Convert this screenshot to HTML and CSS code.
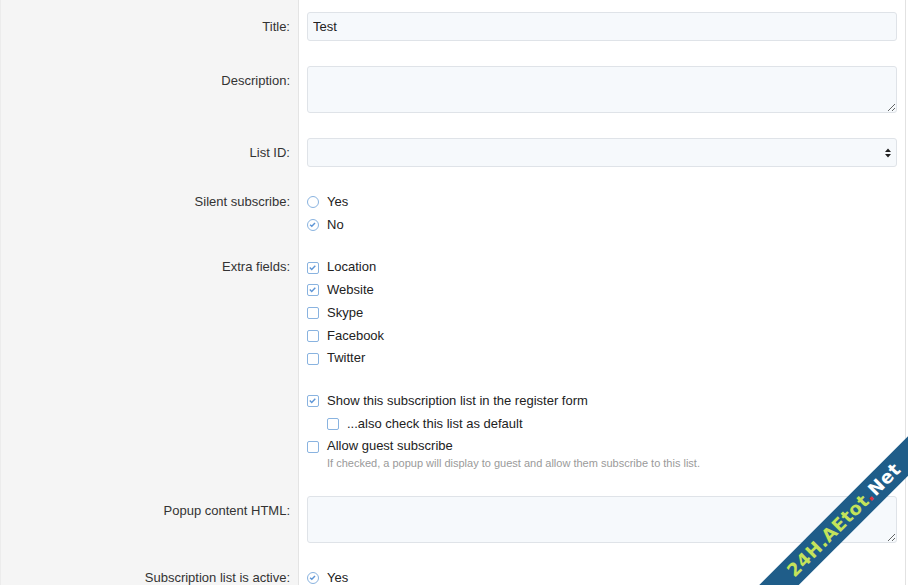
FILE: index.html
```html
<!DOCTYPE html>
<html lang="en">
<head>
  <meta charset="UTF-8">
  <meta name="viewport" content="width=device-width, initial-scale=1.0">
  <link rel="stylesheet" href="styles.css">
  <title>Subscription list</title>
</head>
<body>
  <form class="form">
    <div class="row">
      <div class="row-label">Title:</div>
      <div class="row-field"><input class="input" type="text" value="Test"></div>
    </div>

    <div class="row">
      <div class="row-label">Description:</div>
      <div class="row-field"><textarea class="input textarea"></textarea></div>
    </div>

    <div class="row">
      <div class="row-label">List ID:</div>
      <div class="row-field">
        <div class="input select">
          <svg width="6" height="10" viewBox="0 0 6 10"><path d="M0 4 L3 0.5 L6 4 Z M0 6 L3 9.5 L6 6 Z" fill="#222"/></svg>
        </div>
      </div>
    </div>

    <div class="row options">
      <div class="row-label">Silent subscribe:</div>
      <div class="row-field">
        <div class="option"><span class="radio"></span>Yes</div>
        <div class="option"><span class="radio checked"><svg viewBox="0 0 12 12"><path d="M3.6 6.2 L5.3 7.8 L8.5 4.4" /></svg></span>No</div>
      </div>
    </div>

    <div class="row options">
      <div class="row-label">Extra fields:</div>
      <div class="row-field">
        <div class="option"><span class="check"><svg viewBox="0 0 12 12"><path d="M3.3 6.1 L5.2 7.9 L8.8 4.2" /></svg></span>Location</div>
        <div class="option"><span class="check"><svg viewBox="0 0 12 12"><path d="M3.3 6.1 L5.2 7.9 L8.8 4.2" /></svg></span>Website</div>
        <div class="option"><span class="check"></span>Skype</div>
        <div class="option"><span class="check"></span>Facebook</div>
        <div class="option"><span class="check"></span>Twitter</div>
      </div>
    </div>

    <div class="row options hinted">
      <div class="row-label"></div>
      <div class="row-field">
        <div class="option"><span class="check"><svg viewBox="0 0 12 12"><path d="M3.3 6.1 L5.2 7.9 L8.8 4.2" /></svg></span>Show this subscription list in the register form</div>
        <div class="option nested"><span class="check"></span>...also check this list as default</div>
        <div class="option"><span class="check"></span>Allow guest subscribe</div>
        <div class="hint">If checked, a popup will display to guest and allow them subscribe to this list.</div>
      </div>
    </div>

    <div class="row">
      <div class="row-label">Popup content HTML:</div>
      <div class="row-field"><textarea class="input textarea"></textarea></div>
    </div>

    <div class="row options">
      <div class="row-label">Subscription list is active:</div>
      <div class="row-field">
        <div class="option"><span class="radio checked"><svg viewBox="0 0 12 12"><path d="M3.6 6.2 L5.3 7.8 L8.5 4.4" /></svg></span>Yes</div>
      </div>
    </div>
  </form>

  <div class="ribbon">24H.AEtot<span class="dot">.</span><span class="net">Net</span></div>
</body>
</html>
```

FILE: styles.css
```css
html, body {
  margin: 0;
  padding: 0;
  overflow: hidden;
  background: #fff;
}

body {
  font-family: "Liberation Sans", Arial, sans-serif;
  font-size: 13px;
  color: #222;
}

.form {
  width: 904px;
  border-left: 1px solid #ececec;
  border-right: 1px solid #e2e2e2;
}

.row {
  display: grid;
  grid-template-columns: 298px 1fr;
}

.row-label,
.row-field {
  padding: 12px 8px 13px;
}

.row-label {
  background: #f5f5f5;
  border-right: 1px solid #e4e4e4;
  text-align: right;
  line-height: 17px;
  padding-top: 18px;
  color: #333;
}

.row.options .row-label,
.row.options .row-field {
  padding-top: 11px;
  padding-bottom: 9px;
}

.row.options .row-label {
  line-height: 22.7px;
}

.row.hinted .row-label,
.row.hinted .row-field {
  padding-bottom: 14px;
}

.input {
  display: block;
  box-sizing: border-box;
  width: 100%;
  height: 29px;
  margin: 0;
  padding: 0 5px;
  border: 1px solid #dfe3e8;
  border-radius: 3px;
  background: #f6f9fc;
  font-family: inherit;
  font-size: 13px;
  color: #222;
  outline: none;
}

.textarea {
  height: 47px;
  resize: vertical;
}

.select {
  display: flex;
  align-items: center;
  justify-content: flex-end;
  padding-right: 5px;
}

.option {
  display: flex;
  align-items: center;
  gap: 8px;
  line-height: 22.7px;
}

.option.nested {
  padding-left: 20px;
}

.radio,
.check {
  box-sizing: border-box;
  width: 12px;
  height: 12px;
  border: 1.5px solid #89b3e0;
  background: #fff;
  flex: none;
  display: flex;
}

.radio {
  border-radius: 50%;
}

.check {
  border-radius: 2px;
}

.radio svg,
.check svg {
  overflow: visible;
  transform: translate(-1.5px, -1.5px);
  width: 12px;
  height: 12px;
}

.radio path,
.check path {
  fill: none;
  stroke: #5d95d6;
  stroke-width: 1.4;
}

.hint {
  font-size: 11px;
  line-height: 14px;
  color: #9a9a9a;
  margin-top: -2px;
  padding-left: 20px;
}

.ribbon {
  position: absolute;
  left: 679px;
  top: 506px;
  width: 330px;
  height: 28px;
  line-height: 28px;
  transform: rotate(-45deg);
  background: #1f5d89;
  color: #c4e35a;
  font-family: "DejaVu Sans", sans-serif;
  font-weight: bold;
  font-size: 18px;
  text-align: center;
  letter-spacing: 0.5px;
}

.ribbon .dot {
  color: #e0323c;
}

.ribbon .net {
  color: #fff;
}
```
